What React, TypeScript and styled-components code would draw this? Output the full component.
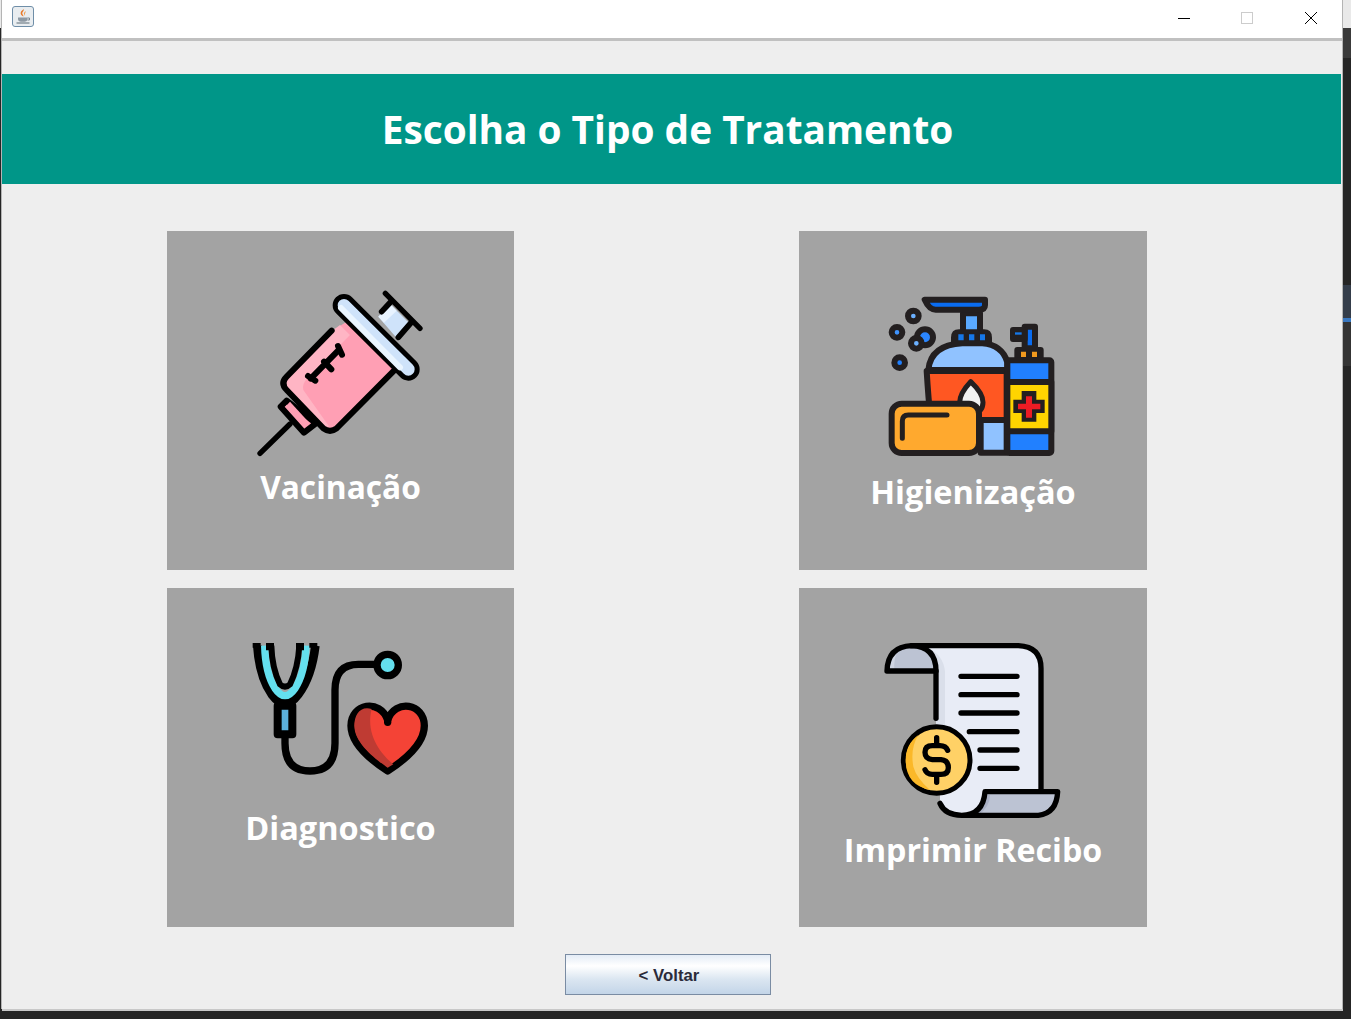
import styled, { createGlobalStyle } from 'styled-components';

const GlobalStyle = createGlobalStyle`
  html, body {
    margin: 0;
    padding: 0;
    background: #252525;
    overflow: hidden;
  }
`;

const Desktop = styled.div`
  display: flex;
  width: 1351px;
  height: 1019px;
  overflow: hidden;
`;

const SideStrip = styled.div<{ $width: number }>`
  display: flex;
  flex-direction: column;
  flex: none;
  width: ${(p) => p.$width}px;
  background: #252525;
`;

const StripPart = styled.div<{ $h: number; $color: string }>`
  flex: none;
  height: ${(p) => p.$h}px;
  background: ${(p) => p.$color};
`;

const Column = styled.div`
  display: flex;
  flex-direction: column;
  flex: none;
  width: 1341px;
  height: 1019px;
`;

const Window = styled.div`
  display: flex;
  flex-direction: column;
  height: 1009px;
  border-right: 1px solid #b4b4b4;
  border-left: 1px solid #b4b4b4;
  margin-left: -1px;
  box-sizing: border-box;
  background: #eeeeee;
`;

const BottomEdge = styled.div`
  height: 2px;
  background: #c8c8c8;
`;

const TitleBar = styled.div`
  display: flex;
  flex: none;
  align-items: flex-start;
  justify-content: space-between;
  height: 32px;
  padding: 6px 0 0 10px;
  background: #ffffff;
  border-bottom: 3px solid #c0c0c0;
`;

const WindowButtons = styled.div`
  display: flex;
  margin-top: -6px;
`;

const WindowButton = styled.div`
  display: flex;
  align-items: center;
  justify-content: center;
  width: 63px;
  height: 36px;
`;

const Banner = styled.div`
  display: flex;
  flex: none;
  align-items: center;
  justify-content: center;
  height: 110px;
  margin-top: 33px;
  margin-right: 1px;
  padding-right: 8px;
  color: #ffffff;
  background: #009688;
  font-family: 'Open Sans', 'Liberation Sans', sans-serif;
  font-size: 38.8px;
  font-weight: 700;
`;

const Grid = styled.div`
  display: grid;
  grid-template-columns: 347px 348px;
  grid-template-rows: 339px 339px;
  column-gap: 285px;
  row-gap: 18px;
  margin: 47px 0 0 165px;
`;

const Card = styled.div<{ $top: number }>`
  display: flex;
  flex-direction: column;
  align-items: center;
  padding-top: ${(p) => p.$top}px;
  box-sizing: border-box;
  background: #a3a3a3;
  cursor: pointer;
`;

const CardIcon = styled.svg`
  display: block;
  flex: none;
  margin-left: -2px;
`;

const CardLabel = styled.div<{ $gap: number; $size?: number }>`
  margin-top: ${(p) => p.$gap}px;
  color: #ffffff;
  font-family: 'Open Sans', 'Liberation Sans', sans-serif;
  font-size: ${(p) => p.$size ?? 32}px;
  font-weight: 700;
  line-height: 40px;
  white-space: nowrap;
`;

const Footer = styled.div`
  display: flex;
  margin: 27px 0 0 563px;
`;

const BackButton = styled.button`
  width: 206px;
  height: 41px;
  padding: 3px 0 0 2px;
  box-sizing: border-box;
  color: #2b2b3a;
  background: linear-gradient(#e4ecf6 0%, #ffffff 28%, #dbe6f1 62%, #c3d5e8 100%);
  border: 1px solid #7a8ca3;
  font-family: 'Liberation Sans', Arial, sans-serif;
  font-size: 16.8px;
  font-weight: 700;
`;

const JavaIcon = () => (
  <svg width="22" height="21" viewBox="0 0 22 21">
    <rect x="0.5" y="0.5" width="21" height="20" rx="2.5" fill="#e9edf0" stroke="#6f8ea8" />
    <path d="M11.500 3c1.200 2-2 3-1 5 .4.900 1 1.500 1 2.500-2.500-1-3.800-3.200-2-5.500.7-.8 1.700-1.200 2-2z" fill="#e8792a" />
    <path d="M13.500 5c.6 1.700-1.400 2.800-.7 4.800-1.400-1.200-1.200-3.500.7-4.800z" fill="#ee9a4a" />
    <path d="M6 11.500h9.500v1.500c0 1.800-1.400 2.800-3 2.800h-3.500c-1.600 0-3-1-3-2.800z" fill="#8e99a3" />
    <path d="M4.500 17h13" stroke="#7b8790" strokeWidth="1.300" />
    <path d="M15.500 12h2v2h-2" fill="none" stroke="#7b8790" />
  </svg>
);

const SyringeIcon = () => (
  <CardIcon width="200" height="185" viewBox="0 0 600 555">
    <path d="M60 520L150 432" stroke="#000" strokeWidth="16" strokeLinecap="round" fill="none" />
    <path d="M415 110L450 72L508 130L468 172Z" fill="#cfe3fa" />
    <path d="M415 110L450 72L470 92L432 128Z" fill="#e8f3ff" />
    <path d="M425 95L452 66M516 125L475 172" stroke="#000" strokeWidth="17" strokeLinecap="round" fill="none" />
    <path d="M436 40L540 145" stroke="#000" strokeWidth="16" strokeLinecap="round" fill="none" />
    <path d="M140 362L122 380L192 458L228 430Z" fill="#ff9fb4" stroke="#000" strokeWidth="18" strokeLinejoin="round" />
    <path d="M150 365L136 380L190 435L205 425Z" fill="#ff9fb4" />
    <path d="M280 150L140 290Q120 310 140 330L250 445Q270 460 290 445L465 270L320 125Z" fill="#ff9fb4" />
    <path d="M280 150L140 290Q125 310 140 330L245 440L268 440L190 330Q185 312 205 292L330 165L300 135Z" fill="#ffb5c4" />
    <path d="M275 152L140 290Q120 310 140 330L250 445Q270 460 290 445L462 272" fill="none" stroke="#000" strokeWidth="18" strokeLinecap="round" />
    <path d="M212 296L298 208M294 198L306 224M252 245L274 268M204 288L226 302" fill="none" stroke="#000" strokeWidth="18" strokeLinecap="round" />
    <path d="M312 76L505 268" stroke="#000" strokeWidth="68" strokeLinecap="round" fill="none" />
    <path d="M312 76L505 268" stroke="#cfe3fa" strokeWidth="38" strokeLinecap="round" fill="none" />
    <path d="M303 84L480 262" stroke="#eaf5ff" strokeWidth="18" strokeLinecap="round" fill="none" />
  </CardIcon>
);

const SoapIcon = () => (
  <CardIcon width="190" height="180" viewBox="-6 0 570 540">
    <g stroke="#231f20" strokeWidth="18" strokeLinejoin="round">
      <circle cx="103" cy="93" r="16" fill="#6bb0ff" />
      <circle cx="54" cy="142" r="16" fill="#3f94ff" />
      <circle cx="62" cy="233" r="16" fill="#1f7fff" />
      <circle cx="138" cy="157" r="24" fill="#2b86ff" />
      <circle cx="112" cy="175" r="16" fill="#6bb0ff" />
      <path d="M252 85H303V145H252Z" fill="#5aa9ff" />
      <path d="M137 44H318V60Q318 74 300 74H170Q150 74 137 44Z" fill="#0a6cf0" />
      <path d="M225 178V158Q225 142 240 142H315Q330 142 330 158V178Z" fill="#231f20" />
      <path d="M148 255Q155 180 250 175H310Q370 180 385 232V255Z" fill="#90c2ff" />
      <path d="M143 258H383V405H155Q148 340 143 258Z" fill="#ff5722" />
      <path d="M305 405H383V503H305Z" fill="#90c2ff" />
    </g>
    <path d="M238 148h16v18h-16zM270 148h16v18h-16zM303 148h15v18h-15z" fill="#1677e8" />
    <path d="M275 290Q312 325 312 352Q312 385 275 385Q242 385 242 352Q242 325 275 290Z" fill="#f1f1f1" stroke="#231f20" strokeWidth="15" strokeLinejoin="round" />
    <rect x="38" y="356" width="262" height="148" rx="30" fill="#ffa92e" stroke="#231f20" strokeWidth="18" />
    <path d="M70 460V408Q70 390 88 390H204" fill="none" stroke="#231f20" strokeWidth="15" strokeLinecap="round" />
    <g stroke="#231f20" strokeWidth="18" strokeLinejoin="round">
      <path d="M437 190V125H468V190Z" fill="#0a6cf0" />
      <path d="M437 135H402V162H437Z" fill="#231f20" />
      <path d="M415 225V195H485V225Z" fill="#231f20" />
      <rect x="385" y="226" width="132" height="278" rx="6" fill="#2180ff" />
      <path d="M385 291H517V439H385Z" fill="#ffd400" />
    </g>
    <path d="M426 200h15v16h-15zM459 200h15v16h-15z" fill="#f39a1e" />
    <path d="M408 142h20v7h-20z" fill="#1677e8" />
    <path d="M428 318H472V344H497V384H472V410H428V384H403V344H428Z" fill="#231f20" />
    <path d="M441 334H459V356H484V373H459V398H441V373H417V356H441Z" fill="#ed1c24" />
  </CardIcon>
);

const StethoscopeIcon = () => (
  <CardIcon width="200" height="150" viewBox="0 0 600 450">
    <path d="M52 32Q58 125 95 178Q115 205 135 205Q155 205 175 178Q215 125 226 32" fill="none" stroke="#000" strokeWidth="26" />
    <path d="M74 32Q76 115 105 160Q120 182 135 182Q150 182 165 160Q195 115 198 32" fill="none" stroke="#64dfee" strokeWidth="22" />
    <path d="M94 32Q96 100 120 148Q135 162 150 148Q174 100 178 32" fill="none" stroke="#000" strokeWidth="18" />
    <path d="M38 24H62V38H38ZM78 24H102V46H78ZM168 24H192V46H168ZM208 24H232V38H208Z" fill="#000" />
    <rect x="113" y="212" width="44" height="86" fill="#5bb0dc" stroke="#000" strokeWidth="24" strokeLinejoin="round" />
    <path d="M135 305V325Q135 408 210 408Q285 408 285 325V165Q285 88 355 88H410" fill="none" stroke="#000" strokeWidth="22" />
    <circle cx="443" cy="90" r="32" fill="#64dfee" stroke="#000" strokeWidth="22" />
    <path d="M443 408C400 380 333 330 333 272C333 205 420 190 443 255C466 190 553 205 553 272C553 330 486 380 443 408Z" fill="#f44336" stroke="#000" strokeWidth="22" strokeLinejoin="round" />
    <path d="M395 222C360 212 343 240 343 272C343 325 410 375 443 398L460 388C425 360 375 300 395 222Z" fill="#bf3b33" />
    <path d="M443 252V262" stroke="#000" strokeWidth="22" strokeLinecap="round" />
  </CardIcon>
);

const ReceiptIcon = () => (
  <CardIcon width="195" height="190" viewBox="0 0 585 570">
    <path d="M110 32H430Q498 35 498 100V470H330Q325 540 260 541Q210 540 195 505V110H183Q183 50 110 32Z" fill="#e8ecf6" />
    <path d="M160 40Q205 60 210 110V270H183V110Q180 60 140 38Z" fill="#dadfea" />
    <path d="M36 108H183Q183 35 110 32Q38 35 36 108Z" fill="#bcc3d3" />
    <path d="M36 108Q38 60 70 42Q55 70 58 108Z" fill="#cfd5e2" />
    <path d="M330 470H548Q545 535 490 541H262Q325 540 330 470Z" fill="#bcc3d3" />
    <path d="M345 480Q345 515 310 540H280Q325 530 335 480Z" fill="#a9b0c4" />
    <g fill="none" stroke="#000" strokeWidth="16" strokeLinecap="round" strokeLinejoin="round">
      <path d="M110 32H430Q498 35 498 100V465" />
      <path d="M36 108H183Q183 35 110 32Q38 35 36 108Z" />
      <path d="M183 108V250" />
      <path d="M195 505Q210 540 260 541H490Q545 535 548 470H330Q325 540 260 541" />
      <path d="M258 124H426M258 179H426M258 234H426M283 290H426M315 345H426M315 400H426" />
    </g>
    <circle cx="185" cy="375" r="100" fill="#ffd166" stroke="#000" strokeWidth="15" />
    <path d="M92 375A93 93 0 0 1 130 300Q105 340 115 395Q125 430 165 465Q92 450 92 375Z" fill="#fbb829" />
    <path d="M218 346Q212 332 195 332H172Q150 332 150 352Q150 372 172 374H198Q220 376 220 398Q220 418 198 418H172Q155 418 150 404M185 308V332M185 418V442" fill="none" stroke="#000" strokeWidth="16" strokeLinecap="round" />
  </CardIcon>
);

const App = () => {
  return (
    <>
      <GlobalStyle />
      <Desktop>
        <SideStrip $width={2}>
          <StripPart $h={28} $color="#e9e9e9" />
        </SideStrip>
        <Column>
          <Window>
            <TitleBar>
              <JavaIcon />
              <WindowButtons>
                <WindowButton>
                  <svg width="14" height="14" viewBox="0 0 14 14">
                    <path d="M0 7.500H12" stroke="#000" />
                  </svg>
                </WindowButton>
                <WindowButton>
                  <svg width="14" height="14" viewBox="0 0 14 14">
                    <rect x="0.500" y="1.500" width="11" height="11" fill="none" stroke="#cccccc" />
                  </svg>
                </WindowButton>
                <WindowButton>
                  <svg width="14" height="14" viewBox="0 0 14 14">
                    <path d="M1 1L13 13M13 1L1 13" stroke="#000" />
                  </svg>
                </WindowButton>
              </WindowButtons>
            </TitleBar>
            <Banner>Escolha o Tipo de Tratamento</Banner>
            <Grid>
              <Card $top={49}>
                <SyringeIcon />
                <CardLabel $gap={2} $size={31.7}>Vacinação</CardLabel>
              </Card>
              <Card $top={54}>
                <SoapIcon />
                <CardLabel $gap={7} $size={32.5}>Higienização</CardLabel>
              </Card>
              <Card $top={47}>
                <StethoscopeIcon />
                <CardLabel $gap={23} $size={32.5}>Diagnostico</CardLabel>
              </Card>
              <Card $top={47}>
                <ReceiptIcon />
                <CardLabel $gap={5} $size={32.2}>Imprimir Recibo</CardLabel>
              </Card>
            </Grid>
            <Footer>
              <BackButton>&lt; Voltar</BackButton>
            </Footer>
          </Window>
          <BottomEdge />
        </Column>
        <SideStrip $width={8}>
          <StripPart $h={28} $color="#e9e9e9" />
          <StripPart $h={30} $color="#3a3a3a" />
          <StripPart $h={227} $color="#252525" />
          <StripPart $h={33} $color="#343d4a" />
          <StripPart $h={4} $color="#3a78c0" />
          <StripPart $h={44} $color="#343434" />
        </SideStrip>
      </Desktop>
    </>
  );
};

export default App;
